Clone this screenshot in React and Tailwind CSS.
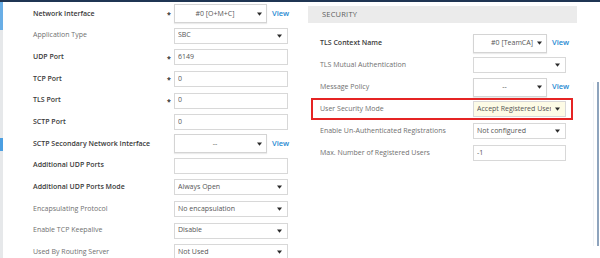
import React from 'react';

const font = { fontFamily: '"Open Sans", "Liberation Sans", sans-serif' };

function Arrow() {
    return (
        <svg width="5" height="4" viewBox="0 0 5 4" className="flex-shrink-0">
            <path d="M0 0.5 L5 0.5 L2.5 3.8 Z" fill="#2b2b2b" />
        </svg>
    );
}

function Input({ value, select, width = 'w-[114px]', bg = 'bg-white' }) {
    return (
        <div className={`${width} h-[16px] border border-[#d8d8d8] ${bg} flex items-center pl-[3px] pr-[5px] gap-1 overflow-hidden`}>
            <span className="flex-1 text-[7px] text-[#555] whitespace-nowrap overflow-hidden">{value}</span>
            {select && <Arrow />}
        </div>
    );
}

function ViewSelect({ value, width, align = 'center' }) {
    return (
        <div className="flex items-center gap-[5px]">
            <div className={`${width} h-[19px] border border-[#d4d4d4] bg-white shadow-[0_1px_1px_rgba(0,0,0,0.08)] flex items-center pr-[4px] gap-[4px]`}>
                <span className={`flex-1 text-[7px] text-[#555] whitespace-nowrap ${align === 'center' ? 'text-center pl-[2px]' : 'text-right'}`}>{value}</span>
                <Arrow />
            </div>
            <span className="text-[7.5px] font-semibold text-[#1f8ad2]">View</span>
        </div>
    );
}

function LeftRow({ label, bold, req, children }) {
    return (
        <div className="h-[21.7px] flex-shrink-0 flex items-center">
            <span className={`w-[134px] text-[7px] whitespace-nowrap ${bold ? 'font-semibold text-[#3a3a3a]' : 'text-[#707070]'}`}>{label}</span>
            <span className="w-[7px] text-[7px] font-bold text-[#333] leading-none pt-[2px]">{req ? '*' : ''}</span>
            {children}
        </div>
    );
}

function RightRow({ label, bold, children, highlight }) {
    return (
        <div className={`h-[22px] flex-shrink-0 flex items-center ${highlight ? 'ml-[3px] w-[262px] border-2 border-[#e52424] pl-[7px]' : 'pl-[12px]'}`}>
            <span className={`w-[153px] text-[7px] whitespace-nowrap ${bold ? 'font-semibold text-[#3a3a3a]' : 'text-[#707070]'}`}>{label}</span>
            {children}
        </div>
    );
}

export default function App() {
    return (
        <div className="w-[600px] h-[258px] overflow-hidden bg-white flex flex-col" style={font}>
            {/* top frame line */}
            <div className="h-[2px] bg-[#1f3553] flex-shrink-0" />

            <div className="flex flex-1 min-h-0 overflow-hidden">
                {/* partial side menu */}
                <div className="w-[3px] flex flex-col bg-[#e6e8ea] flex-shrink-0">
                    <div className="h-[28px] flex-shrink-0 bg-[#69aee6]" />
                    <div className="h-[108px] flex-shrink-0" />
                    <div className="h-[13px] flex-shrink-0 bg-[#4b9fe2]" />
                </div>

                {/* left column */}
                <div className="w-[297px] flex-shrink-0 pl-[30px] pt-[1px] flex flex-col">
                    <LeftRow label="Network Interface" bold req>
                        <ViewSelect value="#0 [O+M+C]" width="w-[93px]" />
                    </LeftRow>
                    <LeftRow label="Application Type">
                        <Input value="SBC" select />
                    </LeftRow>
                    <LeftRow label="UDP Port" bold req>
                        <Input value="6149" />
                    </LeftRow>
                    <LeftRow label="TCP Port" bold req>
                        <Input value="0" />
                    </LeftRow>
                    <LeftRow label="TLS Port" bold req>
                        <Input value="0" />
                    </LeftRow>
                    <LeftRow label="SCTP Port" bold>
                        <Input value="0" />
                    </LeftRow>
                    <LeftRow label="SCTP Secondary Network Interface" bold>
                        <ViewSelect value="--" width="w-[93px]" />
                    </LeftRow>
                    <LeftRow label="Additional UDP Ports" bold>
                        <Input value="" />
                    </LeftRow>
                    <LeftRow label="Additional UDP Ports Mode" bold>
                        <Input value="Always Open" select />
                    </LeftRow>
                    <LeftRow label="Encapsulating Protocol">
                        <Input value="No encapsulation" select />
                    </LeftRow>
                    <LeftRow label="Enable TCP Keepalive">
                        <Input value="Disable" select />
                    </LeftRow>
                    <LeftRow label="Used By Routing Server">
                        <Input value="Not Used" select />
                    </LeftRow>
                </div>

                {/* right column */}
                <div className="flex-1 pl-[8px] pt-[4px] flex flex-col">
                    <div className="w-[269px] h-[17px] flex-shrink-0 bg-[#ebebeb] flex items-center pl-[14px] mb-[9px]">
                        <span className="text-[7.5px] text-[#606060] tracking-[0.2px]">SECURITY</span>
                    </div>
                    <RightRow label="TLS Context Name" bold>
                        <ViewSelect value="#0 [TeamCA]" width="w-[74px]" align="right" />
                    </RightRow>
                    <RightRow label="TLS Mutual Authentication">
                        <Input value="" select width="w-[93px]" />
                    </RightRow>
                    <RightRow label="Message Policy">
                        <ViewSelect value="--" width="w-[74px]" />
                    </RightRow>
                    <RightRow label="User Security Mode" highlight>
                        <Input value="Accept Registered Users" select width="w-[93px]" bg="bg-[#fdfbe6]" />
                    </RightRow>
                    <RightRow label="Enable Un-Authenticated Registrations">
                        <Input value="Not configured" select width="w-[93px]" />
                    </RightRow>
                    <RightRow label="Max. Number of Registered Users">
                        <Input value="-1" width="w-[93px]" />
                    </RightRow>
                </div>

                {/* scroll edge */}
                <div className="w-[9px] flex-shrink-0 flex pt-[80px] pb-[12px]">
                    <div className="w-[1px] ml-[2px] bg-[#eef1f4]" />
                    <div className="w-[2px] ml-[3px] bg-[#8ea4bd]" />
                </div>
            </div>
        </div>
    );
}
